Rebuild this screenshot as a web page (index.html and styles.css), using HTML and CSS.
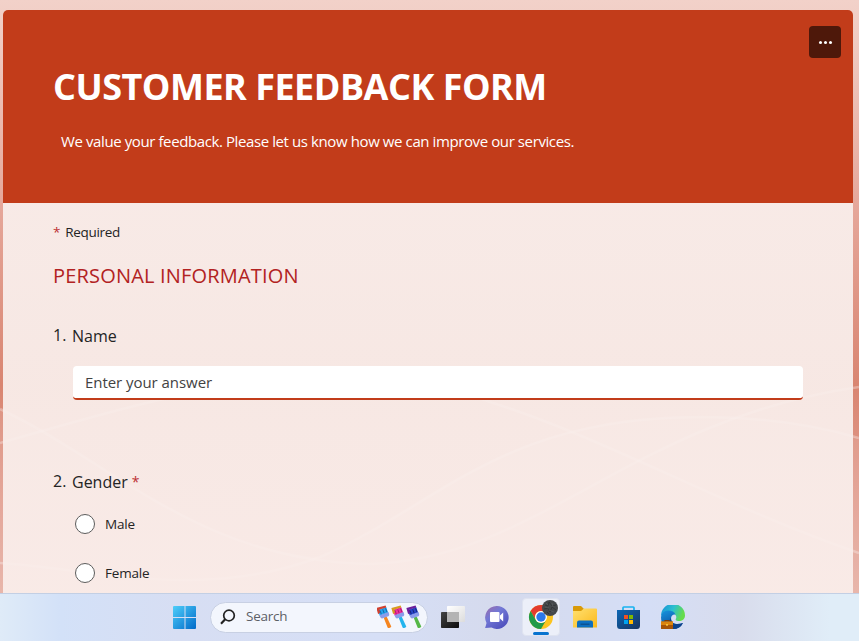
FILE: index.html
```html
<!DOCTYPE html>
<html lang="en">
<head>
<meta charset="utf-8">
<title>Customer Feedback Form</title>
<link rel="stylesheet" href="styles.css">
</head>
<body>
<main class="page">
  <svg class="waves" viewBox="0 0 859 593" aria-hidden="true">
    <path class="wave-fill" d="M0 409C120 470 200 548 320 557C440 500 500 417 700 417Q790 417 859 438V593H0Z"/>
    <path class="wave-line" d="M0 409C110 460 200 562 370 564C540 558 630 420 859 387"/>
    <path class="wave-line" d="M0 443C160 398 340 340 490 402C610 440 720 505 859 553"/>
    <path class="wave-line" d="M0 563C90 568 200 602 320 557C440 505 500 417 700 417Q790 417 859 438"/>
  </svg>
  <section class="form">
    <header class="banner">
      <div class="banner-text">
        <h1 class="title">CUSTOMER FEEDBACK FORM</h1>
        <p class="subtitle">We value your feedback. Please let us know how we can improve our services.</p>
      </div>
      <button class="more" aria-label="More options"><i></i><i></i><i></i></button>
    </header>
    <div class="body">
      <p class="required"><b class="star">*</b><span>Required</span></p>
      <h2 class="section">PERSONAL INFORMATION</h2>
      <div class="question name-q"><span class="num">1.</span><span class="label">Name</span></div>
      <div class="answer">Enter your answer</div>
      <div class="question gender-q"><span class="num">2.</span><span class="label">Gender</span><b class="star">*</b></div>
      <div class="option"><i class="radio"></i><span>Male</span></div>
      <div class="option"><i class="radio"></i><span>Female</span></div>
    </div>
  </section>
</main>
<footer class="taskbar">
  <div class="cell">
    <svg width="24" height="24" viewBox="0 0 24 24"><defs><linearGradient id="win" x1="0" y1="0" x2="24" y2="24" gradientUnits="userSpaceOnUse"><stop offset="0" stop-color="#4fd0fb"/><stop offset="1" stop-color="#0068c8"/></linearGradient></defs><path fill="url(#win)" d="M1 1H11.500V12H0V2Q0 1 1 1ZM12.500 1H22Q23 1 23 2V12H12.500ZM0 13H11.500V24H1Q0 24 0 23ZM12.500 13H23V23Q23 24 22 24H12.500Z"/></svg>
  </div>
  <div class="search">
    <svg width="16" height="16" viewBox="0 0 16 16" fill="none" stroke="#222" stroke-width="1.700"><circle cx="9" cy="6.500" r="5.300"/><path d="M5.200 10.200L1 14.800" stroke-width="2.100"/></svg>
    <span class="find">Search</span>
    <svg class="brushes" width="46" height="24" viewBox="0 0 46 24">
      <g transform="rotate(-20 8 12)"><path fill="#f5851f" d="M6.500 12h3.200l1 11q-2 1.500-3.800 0Z"/><path fill="#22a5ee" d="M3.500 3h9v6h-9Z"/><path fill="#8a9cea" d="M3.500 8.500h9.500v1.500q0 2.500-2.500 2.500h-5q-2 0-2-2.500Z"/><path fill="#d0402f" d="M3 .5l9.500 1v2l-7-.5-.5 3-2.500 1Z"/><path stroke="#1c5a9c" stroke-width=".8" d="M5.500 4v4M8.500 4v4M11.500 4v4"/></g>
      <g transform="translate(15 0) rotate(-20 8 12)"><path fill="#22b4ed" d="M6.500 12h3.200l1 11q-2 1.500-3.800 0Z"/><path fill="#ed2f9c" d="M3.500 3h9v6h-9Z"/><path fill="#8a9cea" d="M3.500 8.500h9.500v1.500q0 2.500-2.500 2.500h-5q-2 0-2-2.500Z"/><path fill="#d89a20" d="M3 .5l9.500 1v2l-7-.5-.5 3-2.500 1Z"/><path stroke="#a41770" stroke-width=".8" d="M5.500 4v4M8.500 4v4M11.500 4v4"/></g>
      <g transform="translate(30 0) rotate(-20 8 12)"><path fill="#55b848" d="M6.500 12h3.200l1 11q-2 1.500-3.800 0Z"/><path fill="#2746c8" d="M3.500 3h9v6h-9Z"/><path fill="#8a9cea" d="M3.500 8.500h9.500v1.500q0 2.500-2.500 2.500h-5q-2 0-2-2.500Z"/><path fill="#6b1f9c" d="M3 .5l9.500 1v2l-7-.5-.5 3-2.500 1Z"/><path stroke="#141f72" stroke-width=".8" d="M5.500 4v4M8.500 4v4M11.500 4v4"/></g>
    </svg>
  </div>
  <div class="cell">
    <svg width="24" height="24" viewBox="0 0 24 24"><defs><linearGradient id="dk" x2="1" y2="1"><stop stop-color="#444"/><stop offset="1" stop-color="#0c0c0c"/></linearGradient><linearGradient id="lt" x2="1" y2="1"><stop stop-color="#fff"/><stop offset="1" stop-color="#dcdcdc"/></linearGradient></defs><rect y="7" width="18" height="16" rx=".8" fill="url(#dk)"/><rect x="6" y="1" width="18" height="16" rx=".8" fill="url(#lt)"/><path fill="#b4b4b4" d="M6 7H18V17H6Z"/></svg>
  </div>
  <div class="cell">
    <svg width="24" height="24" viewBox="0 0 24 24"><defs><linearGradient id="ch" x1="0" y1="0" x2=".8" y2="1"><stop stop-color="#a06aa5"/><stop offset=".4" stop-color="#7379d6"/><stop offset="1" stop-color="#4c4dbb"/></linearGradient></defs><path fill="url(#ch)" d="M11.500 1A11.500 11.500 0 1 1 6.500 22.500L.5 23Q-.2 22.500 .6 21.500L1.500 18A11.500 11.500 0 0 1 11.500 1Z"/><rect x="5" y="7" width="9.500" height="10" rx="1" fill="#fff"/><path fill="#fff" d="M15 10.500L18.200 7.500V16.500L15 13.500Z"/></svg>
  </div>
  <div class="cell"><div class="active">
    <svg width="30" height="30" viewBox="0 0 30 30"><circle cx="13" cy="18" r="12" fill="#fcc41f"/><path fill="#e33b2e" d="M2.600 12A12 12 0 0 1 23.400 12H13A6 6 0 0 0 7.800 21Z"/><path fill="#219a49" d="M2.600 12A12 12 0 0 0 13 30L18.200 21A6 6 0 0 1 7.800 21Z"/><circle cx="13" cy="18" r="6" fill="#fff"/><circle cx="13" cy="18" r="4.700" fill="#2b78ea"/><circle cx="22" cy="9" r="8" fill="#45484a"/><path stroke="#2d3032" stroke-width=".7" fill="none" d="M17 6l3 1 1-4 3 4 4-1M16 10l4-1 2 4 2-5 4 3M19 13l2 2"/><path stroke="#66696b" stroke-width=".5" fill="none" d="M18 4l2 2M17 8l4 1M24 4l1 4M21 11l5 2"/></svg>
    <i class="indicator"></i>
  </div></div>
  <div class="cell">
    <svg width="24" height="24" viewBox="0 0 24 24"><defs><linearGradient id="fo" x2="1" y2="1"><stop stop-color="#ffe070"/><stop offset="1" stop-color="#fbb91c"/></linearGradient></defs><path fill="#d99a08" d="M0 2Q0 1 1 1H8L10.500 3.500V7H0Z"/><path fill="url(#fo)" d="M0 6H8L11 3.500H23Q24 3.500 24 4.500V22.500H0Z"/><path fill="#0c6fc0" d="M4 22.500V17.500Q4 15.500 6 15.500H18Q20 15.500 20 17.500V22.500Z"/><path fill="#0b5293" d="M7.500 18.500H16.500V20H7.500Z"/></svg>
  </div>
  <div class="cell">
    <svg width="24" height="24" viewBox="0 0 24 24"><defs><linearGradient id="st" x2="1" y2="1"><stop stop-color="#0c67b5"/><stop offset="1" stop-color="#17335f"/></linearGradient></defs><path fill="none" stroke="#19b3ef" stroke-width="1.700" d="M6 6V2.700Q6 2 6.800 2H16.200Q17 2 17 2.700V6"/><path fill="url(#st)" d="M0 5H23V20.500Q23 24 20 24H3Q0 24 0 20.500Z"/><path fill="#f25022" d="M7 10h4v4h-4Z"/><path fill="#7fba00" d="M12 10h4v4h-4Z"/><path fill="#00a4ef" d="M7 15h4v4h-4Z"/><path fill="#ffb900" d="M12 15h4v4h-4Z"/></svg>
  </div>
  <div class="cell">
    <svg width="24" height="24" viewBox="0 0 24 24"><defs><linearGradient id="e1" x2="1" y2=".3"><stop stop-color="#168ed8"/><stop offset=".55" stop-color="#2cc0cf"/><stop offset="1" stop-color="#66dc4b"/></linearGradient><linearGradient id="e2" x2=".5" y2="1"><stop stop-color="#1795df"/><stop offset="1" stop-color="#0c4b9b"/></linearGradient></defs><path fill="url(#e1)" d="M0 11A12 12 0 0 1 24 10.500C24 14.500 20.500 16.500 17 16Q14.200 15.500 14.700 14Q16 12 14.500 10Q9 2 0 11Z"/><path fill="url(#e2)" d="M0 12Q1 5.500 7 5.500Q13 5.500 14.500 9.500Q10 9 10 14Q11 19 16 19Q19 19 22 18Q19 24 12 24Q0 23 0 12Z"/><path fill="#0d438b" d="M10 12.500Q9.500 19 15 19Q19 19.300 22 18Q19 24 12 24Q5 20 10 12.500Z"/><path fill="none" stroke="#7b3d0b" stroke-width="1.200" d="M4 17V15.500H8V17"/><rect y="16.500" width="12" height="7.500" rx=".6" fill="#a75508"/><path fill="#dc850e" d="M0 16.500H12V20H0Z"/><path fill="#ffd24d" d="M5.200 19h1.600v1.800H5.200Z"/></svg>
  </div>
</footer>
</body>
</html>
```
FILE: styles.css
```css
* { box-sizing: border-box; }
body {
  margin: 0;
  width: 859px;
  height: 641px;
  overflow: hidden;
  font-family: "Open Sans", "Noto Sans", sans-serif;
  color: #242424;
}
h1, h2, p { margin: 0; font-weight: 400; }
.page {
  position: relative;
  height: 593px;
  padding: 10px 6px 0 3px;
  overflow: hidden;
  background: linear-gradient(#f2d1c9 0, #f0cbc2 40px, #e5a699 210px, #d98571 385px, #e0998a 480px, #e6aea2 593px);
}
.waves { position: absolute; inset: 0; width: 859px; height: 593px; }
.wave-fill { fill: #fff; opacity: .1; }
.wave-line { fill: none; stroke: #fff; stroke-width: 2.500; opacity: .3; }
.form {
  position: relative;
  height: 583px;
  border-radius: 5px 5px 0 0;
  overflow: hidden;
  background: linear-gradient(rgba(249, 239, 236, .93) 193px, rgba(249, 239, 236, .93) 390px, rgba(250, 238, 235, .93));
}
.banner {
  display: flex;
  justify-content: space-between;
  align-items: flex-start;
  height: 193px;
  padding: 16px 12px 0 50px;
  background: #c23c1a;
  color: #fff;
}
.title { margin-top: 37px; font-size: 36px; line-height: 48px; font-weight: 700; letter-spacing: -.5px; white-space: nowrap; }
.subtitle { margin: 18px 0 0 8px; font-size: 15px; line-height: 24px; letter-spacing: -.4px; white-space: nowrap; }
.more {
  display: flex;
  justify-content: center;
  align-items: center;
  gap: 2px;
  width: 32px;
  height: 32px;
  padding: 0;
  border: 0;
  border-radius: 4px;
  background: #4e180a;
}
.more i { width: 3px; height: 3px; border-radius: 50%; background: #fff; }
.body { padding: 19px 50px 0; }
.star { color: #bc2f32; font-weight: 400; }
.required { display: flex; gap: 5px; font-size: 13.500px; line-height: 20px; letter-spacing: -.3px; }
.section { margin-top: 20px; font-size: 20px; line-height: 28px; letter-spacing: .18px; color: #b22222; }
.question { display: flex; font-size: 16px; line-height: 24px; white-space: nowrap; }
.num { width: 19px; margin-top: -1px; }
.name-q { margin-top: 34px; }
.answer {
  height: 34px;
  margin: 18px 0 0 20px;
  padding: 0 12px;
  border-radius: 4px;
  border-bottom: 2px solid #c23c1a;
  background: #fff;
  font-size: 15px;
  line-height: 32px;
  letter-spacing: -.05px;
  color: #424242;
}
.gender-q { margin-top: 70px; height: 24px; }
.gender-q .star { margin-left: 4px; font-size: 14px; }
.option { display: flex; align-items: center; gap: 10px; height: 20px; margin: 20px 0 29px 22px; font-size: 13.500px; letter-spacing: -.2px; }
.option + .option { margin-top: 0; }
.radio { width: 20px; height: 20px; border: 1px solid #5c5c5c; border-radius: 50%; background: #fff; }
.taskbar {
  display: flex;
  align-items: flex-start;
  height: 48px;
  padding-left: 163px;
  border-top: 1px solid #c3cfe4;
  background: linear-gradient(90deg, #dfebf8 0, #d3e1f8 60px, #d7def3 180px, #d6dff6 380px, #d5daed 500px, #d5def6 650px, #d8dcec 740px, #e0edf8 830px);
}
.cell { display: flex; justify-content: center; align-items: center; width: 44px; height: 46px; }
.search {
  display: flex;
  align-items: center;
  width: 218px;
  height: 31px;
  margin: 8px 3px 0;
  padding: 0 4px 1px 9px;
  border: 1px solid #c8d0e3;
  border-radius: 16px;
  background: #f3f6fd;
  font-size: 13.500px;
  line-height: 19px;
  letter-spacing: -.25px;
  color: #5c5f66;
}
.find { margin: -1px 0 0 10px; }
.brushes { margin-left: auto; }
.active {
  position: relative;
  display: flex;
  justify-content: center;
  width: 38px;
  height: 38px;
  border-radius: 4px;
  border: 1px solid #dfe3f0;
  background: #eceff9;
}
.active svg { margin-left: 3px; }
.indicator { position: absolute; left: 10px; bottom: 0; width: 16px; height: 3px; border-radius: 2px; background: #0873cf; }
```
